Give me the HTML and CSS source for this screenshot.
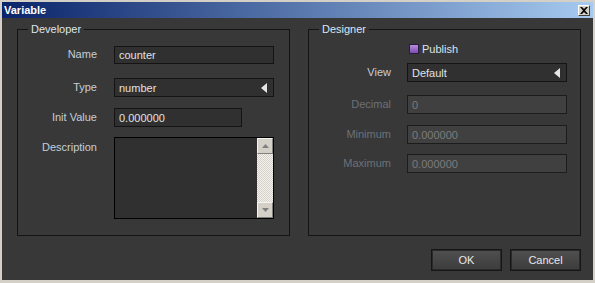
FILE: index.html
```html
<!DOCTYPE html>
<html lang="en">
<head>
    <meta charset="UTF-8">
    <title>Variable</title>
    <link rel="stylesheet" href="styles.css">
</head>
<body>
    <div class="window">
        <div class="title-bar">
            <span class="title">Variable</span>
            <button class="close-btn" aria-label="Close">
                <svg width="8" height="7" viewBox="0 0 8 7"><path d="M0 0h2l2 2 2-2h2L5 3.5 8 7H6L4 5 2 7H0l3-3.5z" fill="#000"/></svg>
            </button>
        </div>

        <div class="content">
            <div class="groups">
                <!-- Developer -->
                <fieldset class="group">
                    <legend>Developer</legend>
                    <div class="row row-name">
                        <label>Name</label>
                        <input class="field" type="text" value="counter">
                    </div>
                    <div class="row row-type">
                        <label>Type</label>
                        <div class="field combo">
                            <span>number</span>
                            <svg class="arrow" width="6" height="10" viewBox="0 0 6 10"><polygon points="6,0 6,10 0,5" fill="#e6e6e6"/></svg>
                        </div>
                    </div>
                    <div class="row row-init">
                        <label>Init Value</label>
                        <input class="field short" type="text" value="0.000000">
                    </div>
                    <div class="row row-desc">
                        <label class="top">Description</label>
                        <div class="field memo">
                            <div class="scrollbar">
                                <div class="sb-btn"><svg width="7" height="4" viewBox="0 0 7 4"><polygon points="3.5,0 7,4 0,4" fill="#808080"/></svg></div>
                                <div class="sb-track"></div>
                                <div class="sb-btn"><svg width="7" height="4" viewBox="0 0 7 4"><polygon points="0,0 7,0 3.5,4" fill="#808080"/></svg></div>
                            </div>
                        </div>
                    </div>
                </fieldset>

                <!-- Designer -->
                <fieldset class="group designer">
                    <legend>Designer</legend>
                    <div class="row row-publish">
                        <span></span>
                        <label class="check"><span class="box"></span>Publish</label>
                    </div>
                    <div class="row row-view">
                        <label>View</label>
                        <div class="field combo">
                            <span>Default</span>
                            <svg class="arrow" width="6" height="10" viewBox="0 0 6 10"><polygon points="6,0 6,10 0,5" fill="#e6e6e6"/></svg>
                        </div>
                    </div>
                    <div class="row row-decimal disabled">
                        <label>Decimal</label>
                        <input class="field" type="text" value="0" disabled>
                    </div>
                    <div class="row row-min disabled">
                        <label>Minimum</label>
                        <input class="field" type="text" value="0.000000" disabled>
                    </div>
                    <div class="row row-max disabled">
                        <label>Maximum</label>
                        <input class="field" type="text" value="0.000000" disabled>
                    </div>
                </fieldset>
            </div>

            <div class="actions">
                <button class="btn">OK</button>
                <button class="btn">Cancel</button>
            </div>
        </div>
    </div>
</body>
</html>
```

FILE: styles.css
```css
* {
    box-sizing: border-box;
}

body {
    margin: 0;
    background: #d4d0c8;
    font-family: 'Liberation Sans', Arial, sans-serif;
    font-size: 11px;
}

.window {
    width: 595px;
    height: 283px;
    display: flex;
    flex-direction: column;
    border-top: 2px solid #d4d0c8;
    border-left: 2px solid #d4d0c8;
    border-right: 2px solid #d4d0c8;
    border-bottom: 3px solid #d4d0c8;
    background: #383838;
}

.title-bar {
    height: 16px;
    display: flex;
    align-items: center;
    justify-content: space-between;
    padding: 0 3px 0 2px;
    background: linear-gradient(to right, #0a246a, #a6caf0);
}

.title {
    color: #fff;
    font-weight: bold;
    font-size: 11px;
}

.close-btn {
    width: 12px;
    height: 11px;
    padding: 0;
    display: flex;
    align-items: center;
    justify-content: center;
    background: #d4d0c8;
    border: 1px solid;
    border-color: #fff #404040 #404040 #fff;
}

.content {
    flex: 1;
    padding: 5px 12px 0 15px;
}

.groups {
    display: flex;
    gap: 18px;
}

.group {
    width: 273px;
    height: 213px;
    margin: 0;
    padding: 5px 0 0;
    border: 1px solid #141414;
    display: flex;
    flex-direction: column;
}

.group legend {
    margin-left: 10px;
    padding: 0 3px;
    color: #dce6f0;
}

.row {
    display: grid;
    grid-template-columns: 79px 160px;
    column-gap: 17px;
    align-items: center;
}

.designer .row {
    grid-template-columns: 82px 160px;
    column-gap: 16px;
}

.row label {
    text-align: right;
    color: #c4ceda;
    margin-top: -2px;
}

.row label.top {
    align-self: start;
    margin-top: 4px;
}

.row-name { margin-top: 6px; }
.row-type { margin-top: 14px; }
.row-init { margin-top: 11px; }
.row-desc { margin-top: 10px; }

.row-publish { margin-top: 2px; }
.row-view { margin-top: 8px; }
.row-decimal { margin-top: 13px; }
.row-min { margin-top: 11px; }
.row-max { margin-top: 10px; }

.field {
    height: 19px;
    width: 160px;
    margin: 0;
    padding: 0 4px;
    border: 1px solid #141414;
    background: #303030;
    color: #e2e2e2;
    font-family: inherit;
    font-size: 11px;
    outline: none;
}

.row-name .field {
    height: 18px;
}

.field.short {
    width: 128px;
}

.combo {
    display: flex;
    align-items: center;
    justify-content: space-between;
    padding-right: 6px;
}

.memo {
    height: 82px;
    padding: 0;
    border-color: #000;
    display: flex;
    justify-content: flex-end;
}

.scrollbar {
    width: 16px;
    display: flex;
    flex-direction: column;
}

.sb-btn {
    height: 16px;
    display: flex;
    align-items: center;
    justify-content: center;
    background: #d4d0c8;
    border: 1px solid;
    border-color: #f4f4f0 #808080 #808080 #f4f4f0;
}

.sb-track {
    flex: 1;
    background: repeating-conic-gradient(#d4d0c8 0 25%, #f4f3ef 0 50%) 0 0 / 2px 2px;
}

.disabled label {
    color: #6c7178;
}

.disabled .field {
    background: #404040;
    border-color: #1c1c1c;
    color: #7c7c7c;
}

.row-publish {
    height: 13px;
}

.check {
    display: flex;
    align-items: center;
    gap: 3px;
    margin-left: 2px;
    text-align: left;
    color: #dce4ee !important;
}

.row .check {
    margin-top: 0;
}

.check .box {
    width: 10px;
    height: 10px;
    border: 1px solid #2a1a3a;
    background: linear-gradient(#b48ee0, #7a4cb0);
}

.actions {
    display: flex;
    justify-content: flex-end;
    gap: 8px;
    margin-top: 13px;
}

.btn {
    width: 71px;
    height: 22px;
    padding: 0;
    border: 1px solid #161616;
    background: linear-gradient(#505050, #3c3c3c);
    box-shadow: inset 0 0 0 1px #2a2a2a;
    color: #e8e8e8;
    font-family: inherit;
    font-size: 11px;
}
```
